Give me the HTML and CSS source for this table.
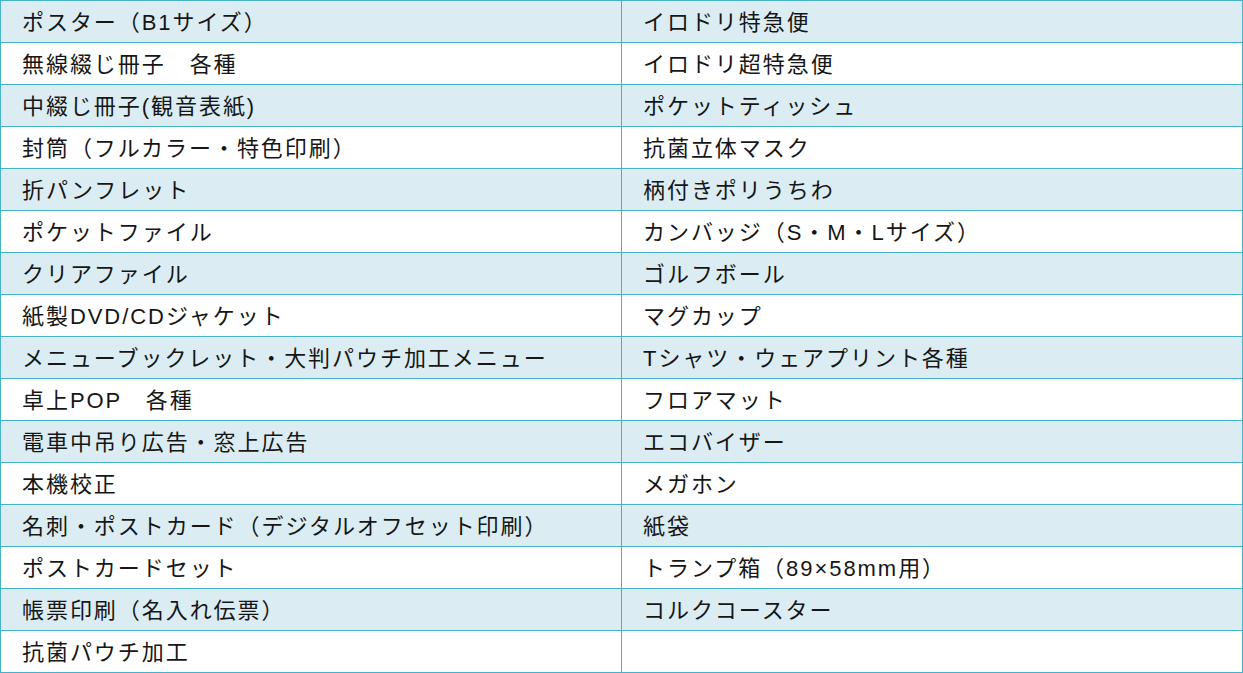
FILE: index.html
```html
<!DOCTYPE html>
<html lang="ja">
<head>
<meta charset="utf-8">
<link rel="stylesheet" href="styles.css">
</head>
<body>
<table class="list">
<tbody>
<tr class="odd"><td>ポスター（B1サイズ）</td><td>イロドリ特急便</td></tr>
<tr><td>無線綴じ冊子　各種</td><td>イロドリ超特急便</td></tr>
<tr class="odd"><td>中綴じ冊子(観音表紙)</td><td>ポケットティッシュ</td></tr>
<tr><td>封筒（フルカラー・特色印刷）</td><td>抗菌立体マスク</td></tr>
<tr class="odd"><td>折パンフレット</td><td>柄付きポリうちわ</td></tr>
<tr><td>ポケットファイル</td><td>カンバッジ（S・M・Lサイズ）</td></tr>
<tr class="odd"><td>クリアファイル</td><td>ゴルフボール</td></tr>
<tr><td>紙製DVD/CDジャケット</td><td>マグカップ</td></tr>
<tr class="odd"><td>メニューブックレット・大判パウチ加工メニュー</td><td>Tシャツ・ウェアプリント各種</td></tr>
<tr><td>卓上POP　各種</td><td>フロアマット</td></tr>
<tr class="odd"><td>電車中吊り広告・窓上広告</td><td>エコバイザー</td></tr>
<tr><td>本機校正</td><td>メガホン</td></tr>
<tr class="odd"><td>名刺・ポストカード（デジタルオフセット印刷）</td><td>紙袋</td></tr>
<tr><td>ポストカードセット</td><td>トランプ箱（89×58mm用）</td></tr>
<tr class="odd"><td>帳票印刷（名入れ伝票）</td><td>コルクコースター</td></tr>
<tr><td>抗菌パウチ加工</td><td></td></tr>
</tbody>
</table>
</body>
</html>
```
FILE: styles.css
```css
html, body {
  margin: 0;
  padding: 0;
  background: #ffffff;
}
.list {
  width: 1243px;
  border-collapse: collapse;
  table-layout: fixed;
  font-family: "Liberation Sans", "Noto Sans CJK JP", sans-serif;
  font-size: 22px;
  letter-spacing: 1.95px;
  color: #161616;
}
.list tr {
  height: 42px;
}
.list td {
  width: 50%;
  border: 1px solid #45b2cd;
  padding: 1px 0 0 21px;
  line-height: 39px;
  vertical-align: middle;
  white-space: nowrap;
}
.list tr.odd td {
  background: #dbedf3;
}
```
